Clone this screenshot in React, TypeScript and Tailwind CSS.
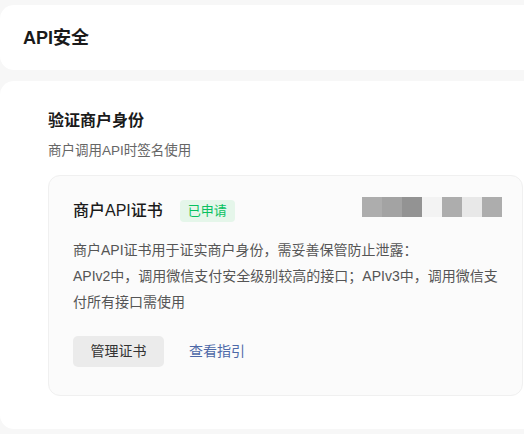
import React from "react";

const font = { fontFamily: '"Liberation Sans", "Noto Sans CJK SC", sans-serif' };

const blocks = ["#adadad", "#a3a3a3", "#939393", "#f3f3f3", "#adadad", "#e8e8e8", "#adadad"];

export default function App() {
  return (
    <div className="w-[524px] h-[434px] bg-[#f7f7f7] pt-[5px] overflow-hidden" style={font}>
      <div className="h-[65px] bg-white rounded-l-[14px] flex items-center pl-[23px]">
        <span className="text-[18px] leading-[24px] font-semibold text-[#1a1a1a]">API安全</span>
      </div>
      <div className="mt-[11px] h-[348px] bg-white rounded-l-[14px] pl-[48px] pr-[1px] pt-[28px]">
        <div className="text-[16px] leading-[24px] font-semibold text-[#1a1a1a]">验证商户身份</div>
        <div className="mt-[7px] text-[13.5px] leading-[22px] text-[#666]">商户调用API时签名使用</div>
        <div className="mt-[13px] bg-[#fbfbfb] border border-[#f0f0f0] rounded-[12px] pl-[24px] pr-[20px] pt-[24px] pb-[28px]">
          <div className="flex items-start justify-between">
            <div className="flex items-center h-[22px]">
              <span className="text-[16px] leading-[22px] font-medium text-[#1a1a1a]">商户API证书</span>
              <span className="ml-[17px] h-[22px] px-[8px] rounded-[4px] bg-[#e5f6ea] text-[#07c160] text-[13px] leading-[22px]">已申请</span>
            </div>
            <div className="flex mt-[-3px]">
              {blocks.map((c, i) => (
                <div key={i} className="w-[20px] h-[20px]" style={{ backgroundColor: c }} />
              ))}
            </div>
          </div>
          <p className="mt-[15px] pr-[4px] text-[14px] leading-[26px] text-[#555]">
            商户API证书用于证实商户身份，需妥善保管防止泄露：
            <br />
            APIv2中，调用微信支付安全级别较高的接口；APIv3中，调用微信支付所有接口需使用
          </p>
          <div className="mt-[21px] flex items-center">
            <button className="h-[31px] w-[91px] rounded-[5px] bg-[#ebebeb] text-[14px] text-[#333]">管理证书</button>
            <a className="ml-[25px] text-[14px] text-[#4e69a8] cursor-pointer">查看指引</a>
          </div>
        </div>
      </div>
    </div>
  );
}
